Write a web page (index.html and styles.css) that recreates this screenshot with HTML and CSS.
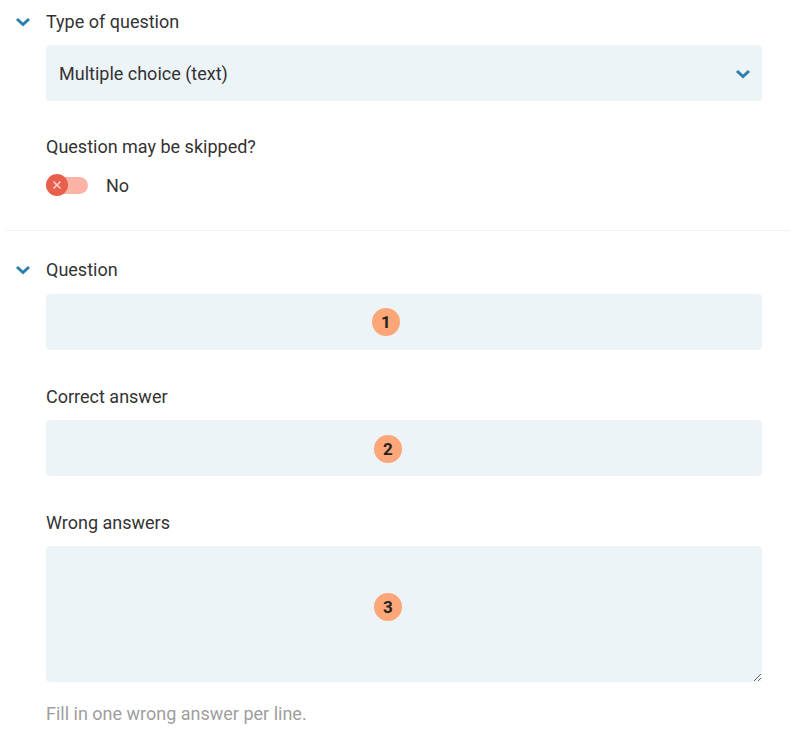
FILE: index.html
```html
<!DOCTYPE html>
<html>
<head>
<meta charset="utf-8">
<link rel="stylesheet" href="styles.css">
</head>
<body>
<div class="page">
  <section class="section first">
    <div class="head">
      <svg class="chev" width="16" height="10" viewBox="0 0 16 10"><path d="M2 2 L8 7.5 L14 2" fill="none" stroke="#2b7fac" stroke-width="3"/></svg>
      <span class="head-title">Type of question</span>
    </div>
    <div class="body">
      <div class="select">
        <span>Multiple choice (text)</span>
        <svg class="sel-chev" width="16" height="10" viewBox="0 0 16 10"><path d="M2 2 L8 7.5 L14 2" fill="none" stroke="#2b7fac" stroke-width="3"/></svg>
      </div>
      <div class="label gap-first">Question may be skipped?</div>
      <div class="toggle-row">
        <div class="toggle">
          <div class="knob">
            <svg width="10" height="10" viewBox="0 0 10 10"><path d="M1.5 1.5 L8.5 8.5 M8.5 1.5 L1.5 8.5" stroke="#fbd0c8" stroke-width="1.6"/></svg>
          </div>
        </div>
        <span class="toggle-text">No</span>
      </div>
    </div>
  </section>
  <div class="divider"></div>
  <section class="section second">
    <div class="head">
      <svg class="chev" width="16" height="10" viewBox="0 0 16 10"><path d="M2 2 L8 7.5 L14 2" fill="none" stroke="#2b7fac" stroke-width="3"/></svg>
      <span class="head-title">Question</span>
    </div>
    <div class="body">
      <div class="field input"><span class="badge b1">1</span></div>
      <div class="label gap-big">Correct answer</div>
      <div class="field input gap-small"><span class="badge b2">2</span></div>
      <div class="label gap-big">Wrong answers</div>
      <div class="field area gap-small">
        <textarea class="textarea"></textarea>
        <span class="badge b3">3</span>
      </div>
      <div class="hint">Fill in one wrong answer per line.</div>
    </div>
  </section>
</div>
</body>
</html>
```
FILE: styles.css
```css
html, body {
  margin: 0;
  padding: 0;
  background: #ffffff;
}
body {
  font-family: Roboto, "Liberation Sans", sans-serif;
  color: #333333;
  font-size: 18px;
}
.page {
  width: 800px;
}
.section.first {
  padding-top: 10px;
}
.head {
  display: flex;
  align-items: center;
  height: 24px;
}
.chev {
  margin-left: 15px;
  width: 16px;
  margin-right: 15px;
}
.head-title {
  font-size: 18px;
  line-height: 24px;
  color: #333;
}
.body {
  padding-left: 46px;
  width: 716px;
  display: flex;
  flex-direction: column;
}
.select {
  margin-top: 11px;
  height: 56px;
  background: #ecf4f8;
  border-radius: 4px;
  display: flex;
  align-items: center;
  justify-content: space-between;
  padding: 0 11px 0 13px;
  font-size: 18px;
}
.sel-chev {
  margin-top: 1px;
}
.label {
  font-size: 18px;
  line-height: 24px;
}
.gap-first {
  margin-top: 34px;
}
.gap-big {
  margin-top: 35px;
}
.toggle-row {
  margin-top: 14px;
  display: flex;
  align-items: center;
  height: 24px;
}
.toggle {
  width: 42px;
  height: 17px;
  border-radius: 9px;
  background: #fcb3a6;
  position: relative;
  display: flex;
  align-items: center;
}
.knob {
  width: 22px;
  height: 22px;
  border-radius: 50%;
  background: #e8604d;
  display: flex;
  align-items: center;
  justify-content: center;
  flex: none;
}
.toggle-text {
  margin-left: 18px;
  font-size: 18px;
}
.divider {
  margin-top: 33px;
  margin-left: 5px;
  width: 785px;
  height: 1px;
  background: #f0f1f2;
}
.section.second {
  padding-top: 27px;
}
.field {
  position: relative;
  background: #ecf4f8;
  border-radius: 4px;
}
.input {
  margin-top: 12px;
  height: 56px;
}
.gap-small {
  margin-top: 11px;
}
.area {
  height: 136px;
  display: flex;
}
.textarea {
  flex: 1;
  border: none;
  background: transparent;
  outline: none;
  margin: 0;
  padding: 0;
  resize: vertical;
  border-radius: 4px;
}
.badge {
  position: absolute;
  width: 28px;
  height: 28px;
  border-radius: 50%;
  background: #fda677;
  color: #222;
  font-weight: 700;
  font-size: 17px;
  display: flex;
  align-items: center;
  justify-content: center;
  pointer-events: none;
}
.b1 {
  left: 326px;
  top: 14px;
}
.b2 {
  left: 328px;
  top: 15px;
}
.b3 {
  left: 328px;
  top: 47px;
}
.hint {
  margin-top: 22px;
  font-size: 18px;
  line-height: 20px;
  color: #9e9e9e;
}
```
